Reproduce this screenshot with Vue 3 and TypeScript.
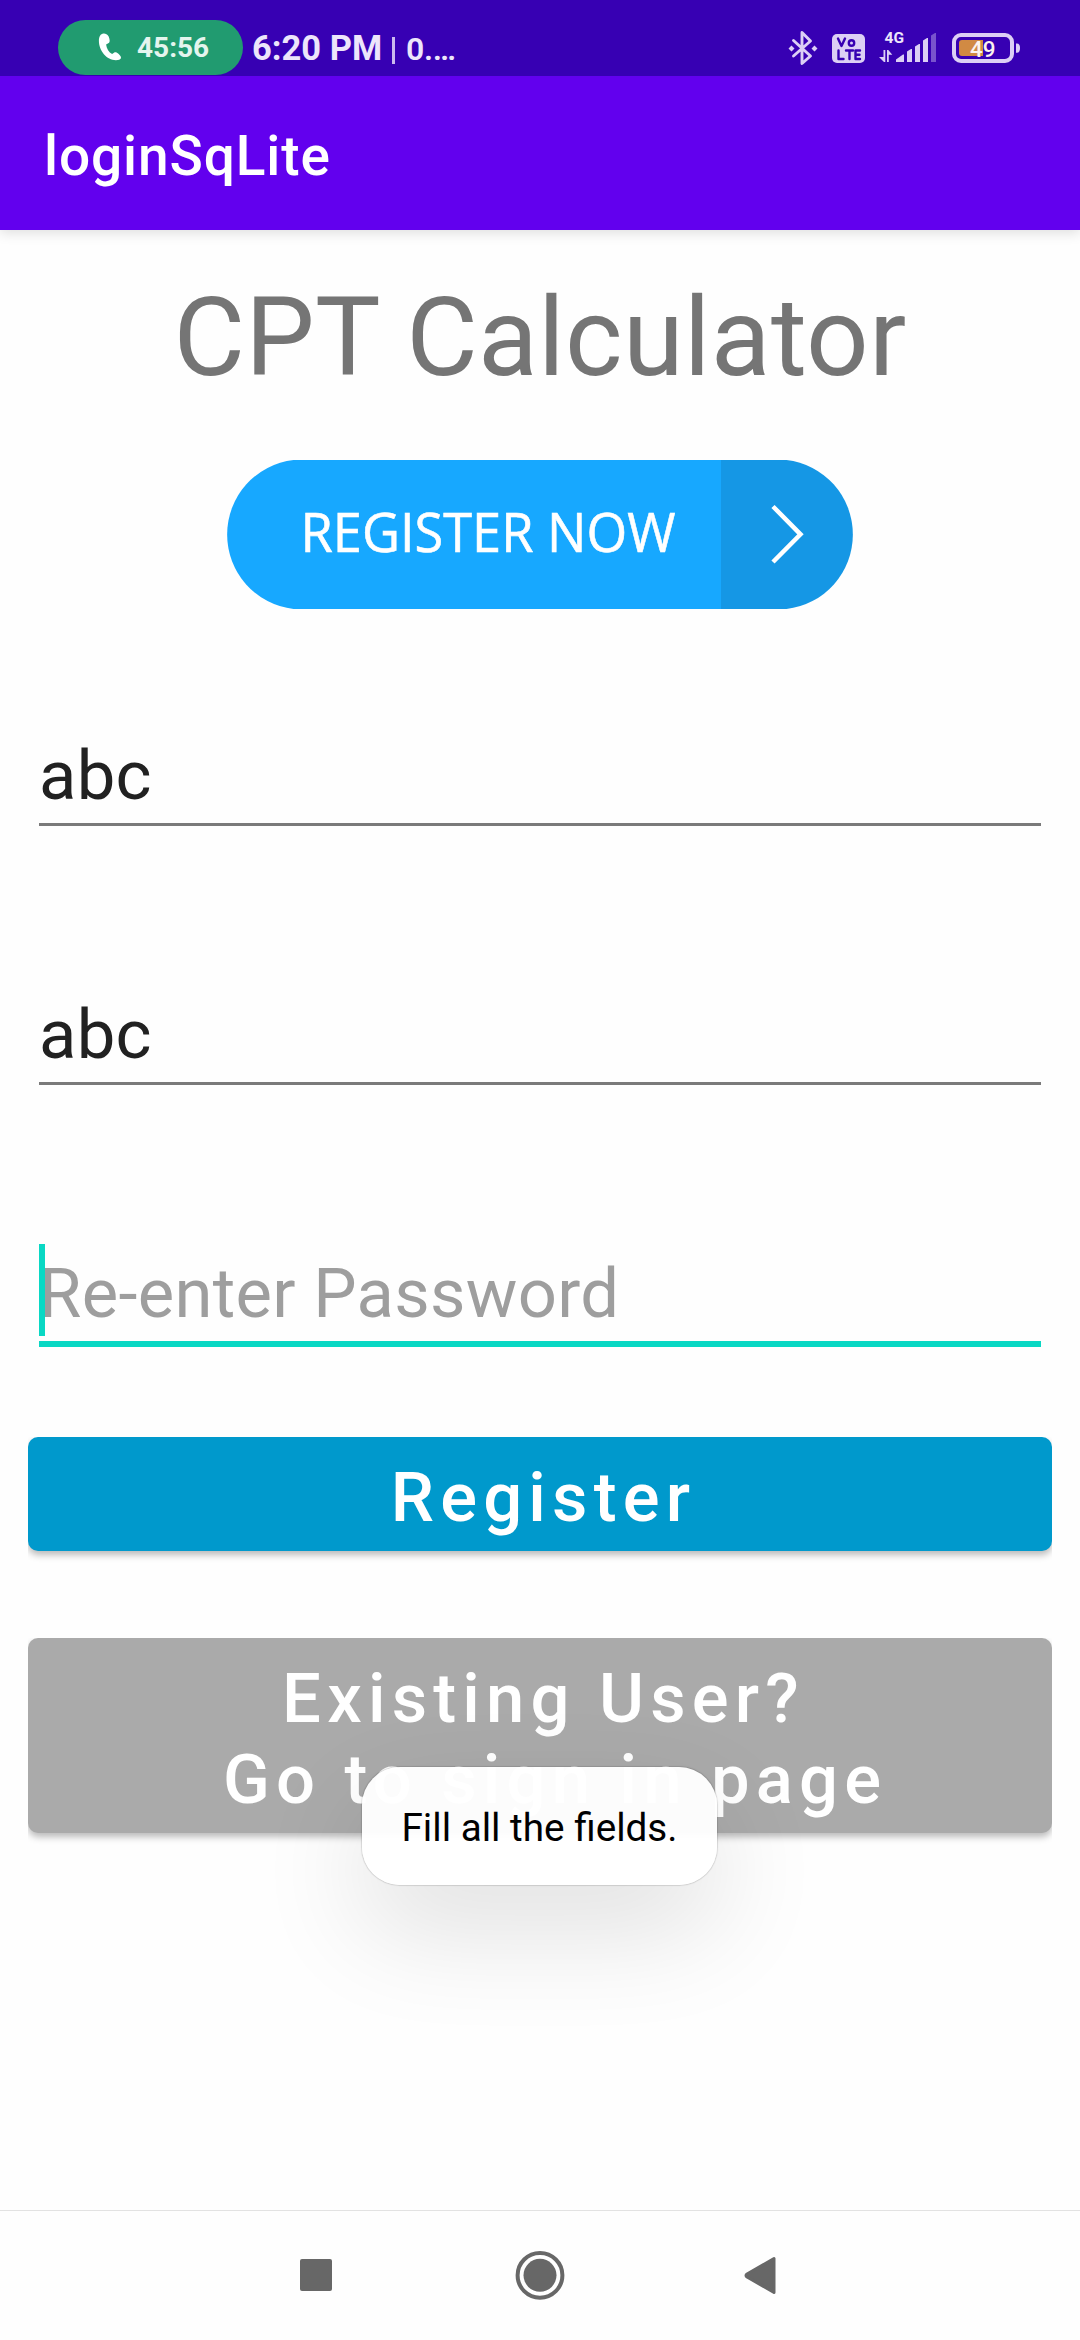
<script setup lang="ts">
interface Field {
  id: string
  value: string
  hint: string
  focused: boolean
}

const fields: Field[] = [
  { id: 'user', value: 'abc', hint: 'Username', focused: false },
  { id: 'password', value: 'abc', hint: 'Password', focused: false },
  { id: 'repeat', value: '', hint: 'Re-enter Password', focused: true },
]

const signInLabel = 'Existing User?\n Go to sign in page'
</script>

<template>
  <div class="screen">
    <header class="status">
      <div class="call">
        <svg class="phone" width="24" height="28" viewBox="0 0 24 28">
          <path
            d="M5.500.6C2.500.9.900 3.600.900 8c0 9.500 7.800 19.200 17 19.200 2.600 0 4.600-.8 5-2 .4-1-.5-2.500-2.200-4.100-1.900-1.700-3.300-2.200-4.700-1.300l-1.900 1.300c-3.200-1.600-5.500-5.200-6-9.500l2.200-1.300c1.300-.8 1.700-2 1.100-4.600C10.700 2.500 8.700.3 5.500.6Z"
            fill="#fff"
          />
        </svg>
        <span class="duration">45:56</span>
      </div>
      <span class="clock">6:20 PM</span>
      <span class="divider"></span>
      <span class="speed">0.…</span>
      <svg class="indicators" width="240" height="40" viewBox="784 28 240 40">
        <g fill="none" stroke="#dccff5" stroke-width="2.900" stroke-linejoin="round" stroke-linecap="round">
          <path d="M793.500 40.500 810.500 56 802 63.500V32.500L810.500 41 793.500 56" />
        </g>
        <path d="m791.500 45.500 3 3-3 3-3-3zM814.500 45.500l3 3-3 3-3-3z" fill="#dccff5" />
        <rect x="832" y="34" width="33" height="29" rx="5" fill="#dccff5" />
        <g fill="none" stroke="#3700b3" stroke-width="2.400" stroke-linecap="round" stroke-linejoin="round">
          <path d="M838 38.500 841.500 46 845 38.500M838.500 50.500V59H843.500M846 50.500H853M849.500 50.500V59M860 50.500H855.500V59H860M855.500 54.700H859.500" />
          <circle cx="851.500" cy="43" r="2.700" />
        </g>
        <text x="884.500" y="43" class="net">4G</text>
        <path d="M883.500 50H885.300V62H884L879 57H883.500ZM887 62V50H888.300L892.300 54.800H888.800V62Z" fill="#dccff5" />
        <g fill="#dccff5">
          <path d="M896 62V59.500L903 54.500H904V62ZM907 62V51.500L911 49H912V62ZM915 62V46.500L919 44H920V62ZM923 62V40.500L927 38H928V62Z" />
          <path d="M931 62V35.500L935 33H936V62Z" opacity=".4" />
          <path d="M1016 43.500h1c2 0 3 1.500 3 4.500s-1 4.700-3 4.700h-1z" />
        </g>
        <rect x="954" y="35" width="58" height="26" rx="7" fill="none" stroke="#dccff5" stroke-width="4" />
        <path d="M983 40V56H962a3 3 0 0 1-3-3V43a3 3 0 0 1 3-3Z" fill="#d18a43" />
        <text x="970" y="56.500" class="level">49</text>
      </svg>
    </header>

    <div class="appbar">loginSqLite</div>

    <main class="content">
      <h1 class="title">CPT Calculator</h1>

      <svg class="banner" width="626" height="149" viewBox="0 0 626 149">
        <path d="M66.500 0H494V149H66.500A75 75 0 0 1 66.500 0Z" fill="#17a8ff" />
        <path d="M494 0H559.500A75 75 0 0 1 559.500 149H494Z" fill="#1597e5" />
        <text x="73.500" y="92" textLength="375" lengthAdjust="spacingAndGlyphs" class="banner-text">REGISTER NOW</text>
        <path d="M546 46.500 573.500 74.300 546 102" fill="none" stroke="#fff" stroke-width="4.500" />
      </svg>

      <div class="form">
        <div v-for="f in fields" :key="f.id" class="field" :class="{ focused: f.focused }">
          <span v-if="f.value">{{ f.value }}</span>
          <span v-else class="hint">{{ f.hint }}</span>
          <i v-if="f.focused" class="caret"></i>
        </div>
      </div>

      <button class="btn register" type="button">Register</button>
      <button class="btn signin" type="button">{{ signInLabel }}</button>
    </main>

    <div class="toast">Fill all the fields.</div>

    <nav class="navbar">
      <svg width="480" height="52" viewBox="300 2249 480 52" fill="#676767">
        <rect x="300" y="2259" width="32" height="32" rx="2" />
        <circle cx="540" cy="2275.300" r="22.400" fill="none" stroke="#676767" stroke-width="4" />
        <circle cx="540" cy="2275.300" r="16.500" />
        <path d="M747 2274 774 2258.500V2292.500L747 2277Q745 2275.500 747 2274Z" stroke="#676767" stroke-width="3" stroke-linejoin="round" />
      </svg>
    </nav>
  </div>
</template>

<style>
body {
  background: #fefefe;
}
</style>

<style scoped>
.screen {
  position: relative;
  display: flex;
  flex-direction: column;
  width: 1080px;
  height: 2340px;
  overflow: hidden;
  background: #fefefe;
  font-family: Roboto, sans-serif;
}

.status {
  position: relative;
  z-index: 1;
  display: flex;
  flex: none;
  box-sizing: border-box;
  height: 76px;
  padding: 20px 56px 0 58px;
  background: #3700b3;
  color: #ede5fb;
  white-space: nowrap;
}

.call {
  display: flex;
  box-sizing: border-box;
  width: 185px;
  height: 55px;
  padding-left: 40px;
  border-radius: 28px;
  background: #219b70;
}

.phone {
  margin-top: 13px;
}

.duration {
  margin-left: 15px;
  color: #e4f5ee;
  font-size: 28px;
  font-weight: 700;
  line-height: 56px;
}

.clock {
  width: 128px;
  margin-left: 9px;
  font-size: 34.5px;
  font-weight: 700;
  line-height: 57px;
}

.divider {
  width: 3px;
  height: 27px;
  margin: 17px 0 0 12px;
  background: #cbb9ee;
}

.speed {
  margin-left: 11px;
  font-size: 32px;
  font-weight: 600;
  letter-spacing: -0.3px;
  line-height: 58px;
}

.indicators {
  margin: 8px 0 0 auto;
}

.net {
  fill: #ede5fb;
  font: 700 15.5px Roboto, sans-serif;
}

.level {
  fill: #fbf3ee;
  font: 500 22.5px Roboto, sans-serif;
}

.appbar {
  position: relative;
  flex: none;
  box-sizing: border-box;
  height: 154px;
  padding: 6px 0 0 44px;
  background: #6200ee;
  box-shadow: 0 3px 12px rgba(0, 0, 0, 0.13);
  color: #fff;
  font-size: 55px;
  font-weight: 500;
  letter-spacing: 0.9px;
  line-height: 148px;
}

.content {
  display: flex;
  flex: 1;
  flex-direction: column;
  padding: 43px 28px 0;
}

.title {
  margin: 0;
  color: #757575;
  font-size: 110px;
  font-weight: 400;
  letter-spacing: 0.25px;
  line-height: 129px;
  text-align: center;
}

.banner {
  align-self: center;
  margin-top: 58px;
}

.banner-text {
  fill: #fff;
  stroke: #fff;
  stroke-width: 0.6px;
  font: 400 55px 'Open Sans', sans-serif;
}

.form {
  display: flex;
  flex-direction: column;
  gap: 162px;
  margin: 120px 11px 0;
}

.field {
  position: relative;
  height: 94px;
  border-bottom: 3px solid #7a7a7a;
  color: #212121;
  font-size: 68.75px;
  letter-spacing: 0.3px;
  line-height: 93px;
}

.field.focused {
  border-bottom: 6px solid #09d8c4;
}

.hint {
  color: #9e9e9e;
}

.caret {
  position: absolute;
  top: -3px;
  left: 0;
  width: 6px;
  height: 92px;
  background: #09d8c4;
}

.btn {
  box-sizing: border-box;
  border: 0;
  border-radius: 10px;
  box-shadow: 0 4px 7px rgba(0, 0, 0, 0.27);
  clip-path: inset(0 0 -24px 0);
  color: #fff;
  font-family: Roboto, sans-serif;
  font-size: 68.75px;
  font-weight: 500;
  letter-spacing: 6.2px;
  line-height: 80.6px;
  text-align: center;
  white-space: pre;
}

.register {
  height: 114px;
  margin-top: 90px;
  padding: 9px 0 0 7px;
  background: #0099cc;
}

.signin {
  height: 195px;
  margin-top: 87px;
  padding: 8px 0 0 7px;
  background: #aaa;
}

.toast {
  position: absolute;
  top: 1767px;
  left: 362px;
  box-sizing: border-box;
  width: 355px;
  height: 118px;
  border-radius: 38px;
  background: rgba(255, 255, 255, 0.965);
  box-shadow: 0 0 1px 1px rgba(0, 0, 0, 0.13), 0 44px 110px rgba(0, 0, 0, 0.12);
  color: #000;
  font-size: 38.7px;
  line-height: 121px;
  text-align: center;
}

.navbar {
  display: flex;
  flex: none;
  justify-content: center;
  box-sizing: border-box;
  height: 130px;
  padding-top: 38px;
  border-top: 1px solid #e2e2e2;
}
</style>
